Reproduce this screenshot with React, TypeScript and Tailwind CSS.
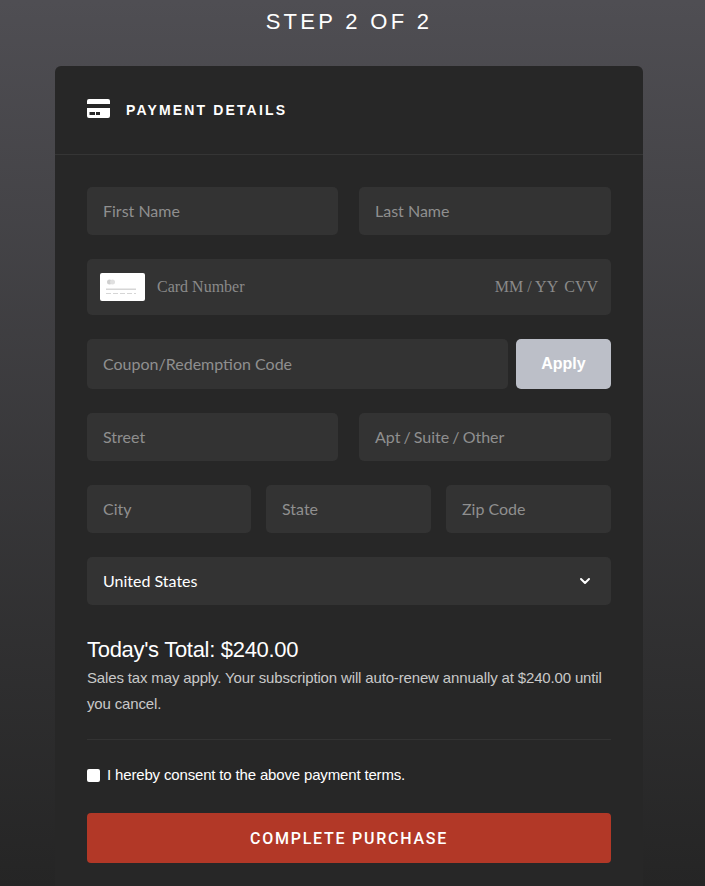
import { ChevronDown } from "lucide-react"

const sans = "font-['Liberation_Sans',Arial,sans-serif]"
const lato = "font-['Lato',sans-serif]"

function Field({ label, className = "" }: { label: string; className?: string }) {
  return (
    <div className={`flex h-12 items-center rounded-[5px] bg-[#333333] pl-4 text-base text-[#8f8f8f] ${lato} ${className}`}>
      {label}
    </div>
  )
}

function CardIcon() {
  return (
    <svg className="mb-1" width="23" height="19" viewBox="0 0 23 19" fill="#ffffff">
      <path d="M2 0h19a2 2 0 0 1 2 2v3H0V2a2 2 0 0 1 2-2z" />
      <path fillRule="evenodd" d="M0 9h23v8a2 2 0 0 1-2 2H2a2 2 0 0 1-2-2V9zm2.500 4v3H8v-3H2.500zm6.500 0v3h4v-3H9z" />
    </svg>
  )
}

function CardThumb() {
  return (
    <div className="flex h-7 w-[45px] shrink-0 rounded-[2px] bg-white">
      <svg width="45" height="28" viewBox="0 0 45 28" fill="none">
        <circle cx="9.500" cy="9" r="2.500" fill="#cfcfcf" />
        <circle cx="12.500" cy="9" r="2.500" fill="#e0e0e0" />
        <rect x="6" y="15.500" width="30" height="1.500" fill="#d6d6d6" />
        <path d="M6 20.500h30" stroke="#d6d6d6" strokeDasharray="5 2" />
      </svg>
    </div>
  )
}

export default function App() {
  return (
    <div className="h-[886px] overflow-hidden bg-gradient-to-b from-[#4f4e53] to-[#252525]">
      <div className="w-[698px]">
        <h1 className={`pt-[8px] text-center text-[22px] leading-[27px] tracking-[3.3px] text-white ${sans}`}>STEP 2 OF 2</h1>

        <div className="mx-auto mt-[31px] h-[900px] w-[588px] rounded-t-[6px] bg-[#272727]">
          <div className="flex h-[89px] items-center gap-4 border-b border-[#353535] pl-8">
            <CardIcon />
            <h2 className={`text-sm font-bold tracking-[2.15px] text-white ${sans}`}>PAYMENT DETAILS</h2>
          </div>

          <div className="flex flex-col px-8 pt-8">
            <div className="grid grid-cols-[251px_252px] gap-[21px]">
              <Field label="First Name" />
              <Field label="Last Name" />
            </div>

            <div className="mt-6 flex h-14 items-center rounded-[5px] bg-[#333333] px-[13px] font-['Liberation_Serif',serif] text-base text-[#8a8a8a]">
              <CardThumb />
              <span className="ml-3">Card Number</span>
              <span className="ml-auto">MM / YY</span>
              <span className="ml-[6px]">CVV</span>
            </div>

            <div className="mt-6 flex gap-2">
              <Field label="Coupon/Redemption Code" className="h-[50px] flex-1" />
              <button className={`h-[50px] w-[95px] rounded-[5px] bg-[#bcbfc8] text-base font-bold text-white ${sans}`}>Apply</button>
            </div>

            <div className="mt-6 grid grid-cols-[251px_252px] gap-[21px]">
              <Field label="Street" />
              <Field label="Apt / Suite / Other" className="[word-spacing:-1px]" />
            </div>

            <div className="mt-6 grid grid-cols-[164px_165px_165px] gap-[15px]">
              <Field label="City" />
              <Field label="State" />
              <Field label="Zip Code" />
            </div>

            <div className={`mt-6 flex h-12 items-center justify-between rounded-[5px] bg-[#333333] pl-4 pr-[18px] text-base text-white ${lato}`}>
              United States
              <ChevronDown className="h-4 w-4" strokeWidth={3} />
            </div>

            <h3 className={`mt-[31px] text-[22px] leading-[28px] tracking-[-0.3px] text-white ${sans}`}>Today's Total: $240.00</h3>
            <p className={`mt-[1px] text-[15px] leading-[26px] tracking-[-0.15px] text-[#c9c9c9] ${sans}`}>
              Sales tax may apply. Your subscription will auto-renew annually at $240.00 until you cancel.
            </p>

            <div className="mt-[22px] border-t border-[#333333]" />

            <label className={`mt-[27px] flex h-[17px] items-center gap-[7px] text-[15px] tracking-[-0.16px] text-white ${sans}`}>
              <span className="h-[13px] w-[13px] rounded-[2px] bg-white" />
              I hereby consent to the above payment terms.
            </label>

            <button className="mt-[29px] h-[50px] rounded-[4px] bg-[#b23827] pt-[1px] font-['Roboto',sans-serif] text-base font-medium tracking-[1.75px] text-white">
              COMPLETE PURCHASE
            </button>
          </div>
        </div>
      </div>
    </div>
  )
}
